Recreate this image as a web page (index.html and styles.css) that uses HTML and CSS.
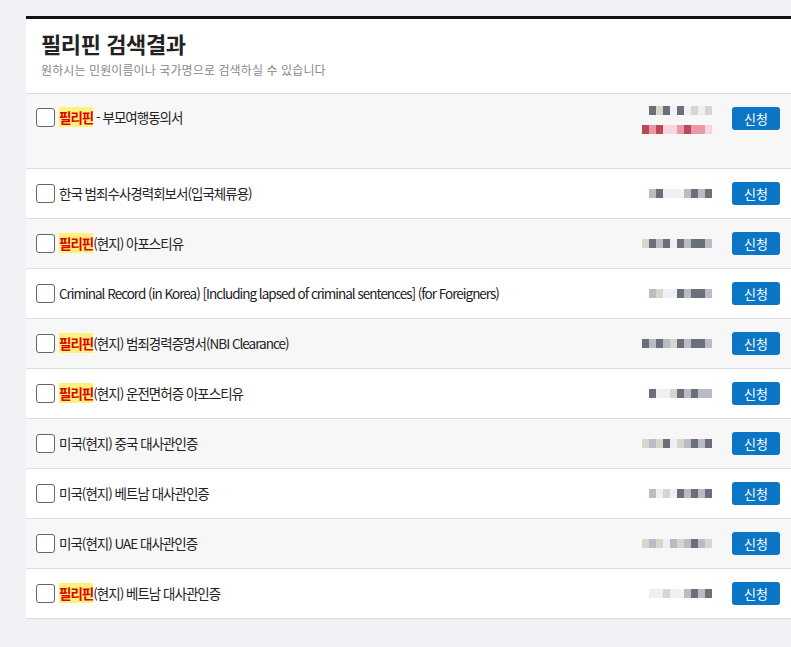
FILE: index.html
```html
<!DOCTYPE html>
<html lang="ko">
<head>
<meta charset="utf-8">
<title>필리핀 검색결과</title>
<link rel="stylesheet" href="styles.css">
</head>
<body>
<div class="card">
  <div class="head">
    <h1 class="title">필리핀 검색결과</h1>
    <p class="sub">원하시는 민원이름이나 국가명으로 검색하실 수 있습니다</p>
  </div>
  <ul class="list">
    <li class="row row-tall alt">
      <label class="name"><span class="box"></span><span><mark class="hl">필리핀</mark> - 부모여행동의서</span></label>
      <div class="price price-two">
        <div class="blur"><i class="c"></i><i class="d"></i><i class="c"></i><i class="a"></i><i class="c"></i><i class="a"></i><i class="d"></i><i class="a"></i><i class="d"></i></div>
        <div class="blur red"><i class="r1"></i><i class="r2"></i><i class="r1"></i><i class="r3"></i><i class="r3"></i><i class="r2"></i><i class="r1"></i><i class="r2"></i><i class="r2"></i><i class="r3"></i></div>
      </div>
      <button class="btn">신청</button>
    </li>
    <li class="row">
      <label class="name"><span class="box"></span><span>한국 범죄수사경력회보서(입국체류용)</span></label>
      <div class="price"><div class="blur"><i class="b"></i><i class="c"></i><i class="a"></i><i class="a"></i><i class="a"></i><i class="b"></i><i class="c"></i><i class="b"></i><i class="c"></i></div></div>
      <button class="btn">신청</button>
    </li>
    <li class="row alt">
      <label class="name"><span class="box"></span><span><mark class="hl">필리핀</mark>(현지) 아포스티유</span></label>
      <div class="price"><div class="blur"><i class="d"></i><i class="c"></i><i class="b"></i><i class="c"></i><i class="a"></i><i class="c"></i><i class="b"></i><i class="c"></i><i class="c"></i><i class="b"></i></div></div>
      <button class="btn">신청</button>
    </li>
    <li class="row">
      <label class="name"><span class="box"></span><span>Criminal Record (in Korea) [Including lapsed of criminal sentences] (for Foreigners)</span></label>
      <div class="price"><div class="blur"><i class="b"></i><i class="d"></i><i class="a"></i><i class="a"></i><i class="c"></i><i class="b"></i><i class="c"></i><i class="c"></i><i class="b"></i></div></div>
      <button class="btn">신청</button>
    </li>
    <li class="row alt">
      <label class="name"><span class="box"></span><span><mark class="hl">필리핀</mark>(현지) 범죄경력증명서(NBI Clearance)</span></label>
      <div class="price"><div class="blur"><i class="c"></i><i class="b"></i><i class="c"></i><i class="b"></i><i class="d"></i><i class="c"></i><i class="b"></i><i class="c"></i><i class="c"></i><i class="b"></i></div></div>
      <button class="btn">신청</button>
    </li>
    <li class="row">
      <label class="name"><span class="box"></span><span><mark class="hl">필리핀</mark>(현지) 운전면허증 아포스티유</span></label>
      <div class="price"><div class="blur"><i class="c"></i><i class="a"></i><i class="a"></i><i class="d"></i><i class="c"></i><i class="b"></i><i class="c"></i><i class="b"></i><i class="b"></i></div></div>
      <button class="btn">신청</button>
    </li>
    <li class="row alt">
      <label class="name"><span class="box"></span><span>미국(현지) 중국 대사관인증</span></label>
      <div class="price"><div class="blur"><i class="d"></i><i class="b"></i><i class="d"></i><i class="c"></i><i class="a"></i><i class="d"></i><i class="b"></i><i class="c"></i><i class="b"></i><i class="c"></i></div></div>
      <button class="btn">신청</button>
    </li>
    <li class="row">
      <label class="name"><span class="box"></span><span>미국(현지) 베트남 대사관인증</span></label>
      <div class="price"><div class="blur"><i class="b"></i><i class="a"></i><i class="d"></i><i class="a"></i><i class="c"></i><i class="b"></i><i class="c"></i><i class="b"></i><i class="c"></i></div></div>
      <button class="btn">신청</button>
    </li>
    <li class="row alt">
      <label class="name"><span class="box"></span><span>미국(현지) UAE 대사관인증</span></label>
      <div class="price"><div class="blur"><i class="d"></i><i class="b"></i><i class="d"></i><i class="a"></i><i class="b"></i><i class="d"></i><i class="b"></i><i class="c"></i><i class="b"></i><i class="d"></i></div></div>
      <button class="btn">신청</button>
    </li>
    <li class="row">
      <label class="name"><span class="box"></span><span><mark class="hl">필리핀</mark>(현지) 베트남 대사관인증</span></label>
      <div class="price"><div class="blur"><i class="a"></i><i class="a"></i><i class="d"></i><i class="a"></i><i class="a"></i><i class="b"></i><i class="c"></i><i class="b"></i><i class="c"></i></div></div>
      <button class="btn">신청</button>
    </li>
  </ul>
</div>
</body>
</html>
```

FILE: styles.css
```css
html, body {
  margin: 0;
  padding: 0;
}
body {
  background: #f1f2f6;
  font-family: "Noto Sans CJK KR", "Noto Sans", sans-serif;
  color: #222;
  overflow-x: hidden;
  padding: 16px 0 0 26px;
}
.card {
  width: 790px;
  background: #fff;
  border-top: 3px solid #111;
}
.head {
  padding: 9px 15px 0;
  height: 65px;
  border-bottom: 1px solid #dcdcdc;
}
.title {
  margin: 0;
  font-size: 22px;
  font-weight: 700;
  line-height: 30px;
  letter-spacing: -0.4px;
  color: #222;
}
.sub {
  margin: 4px 0 0;
  font-size: 12px;
  line-height: 16px;
  color: #888;
  letter-spacing: 0.1px;
}
.list {
  list-style: none;
  margin: 0;
  padding: 0;
}
.row {
  display: flex;
  align-items: center;
  height: 49px;
  padding: 0 36px 0 10px;
  border-bottom: 1px solid #dedede;
  background: #fff;
}
.row.alt {
  background: #f7f7f7;
}
.row-tall {
  height: 74px;
  align-items: flex-start;
}
.row-tall .name {
  margin-top: 13px;
}
.row-tall .price {
  margin-top: 12px;
}
.row-tall .btn {
  margin-top: 13px;
}
.name {
  flex: 1;
  display: flex;
  align-items: center;
  gap: 4px;
  font-size: 13.5px;
  letter-spacing: -1px;
  line-height: 20px;
  color: #222;
  padding-bottom: 1px;
}
.box {
  width: 17px;
  height: 17px;
  border: 1px solid #666;
  border-radius: 3px;
  background: #fff;
  flex: none;
  margin-top: 1px;
}
.hl {
  background: #fff27a;
  color: #e00000;
  font-weight: 700;
  padding: 0;
}
.price {
  width: 68px;
  display: flex;
  flex-direction: column;
  align-items: flex-end;
  gap: 10px;
  margin-right: 20px;
}
.blur {
  display: flex;
  height: 9px;
}
.blur i {
  display: block;
  width: 7px;
  height: 9px;
}
.blur .a { background: #eef0f4; }
.blur .b { background: #b9bcc4; }
.blur .c { background: #6b6f7a; }
.blur .d { background: #d8d6cc; }
.blur .r1 { background: #b94a55; }
.blur .r2 { background: #e79aa6; }
.blur .r3 { background: #f5d7dc; }
.btn {
  width: 48px;
  height: 23px;
  border: 0;
  border-radius: 3px;
  background: #0b76c5;
  color: #fff;
  font-family: "Noto Sans CJK KR", sans-serif;
  font-size: 13px;
  line-height: 23px;
  padding: 0;
  flex: none;
}
```
